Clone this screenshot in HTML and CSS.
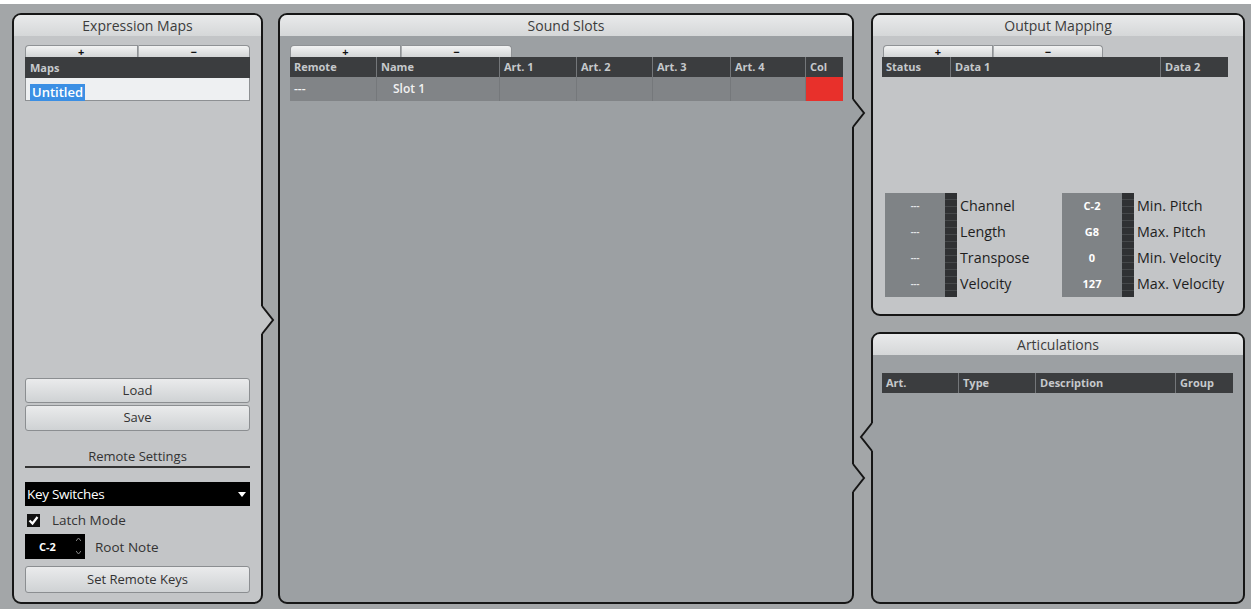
FILE: index.html
```html
<!DOCTYPE html>
<html>
<head>
    <title>Expression Map Setup</title>
    <link rel="stylesheet" href="styles.css">
</head>
<body>

<div class="app">

    <!-- left column: list of maps + remote settings -->
    <section class="panel panel-light maps">
        <div class="panel-title">Expression Maps</div>
        <div class="panel-body">
            <div class="addbar addbar-full"><span>+</span><span>&minus;</span></div>
            <div class="list-head">Maps</div>
            <div class="list-row"><span class="sel">Untitled</span></div>
            <div class="spacer"></div>
            <div class="btn">Load</div>
            <div class="btn btn-save">Save</div>
            <div class="section-label">Remote Settings</div>
            <div class="dropdown">
                <span>Key Switches</span>
                <svg width="8" height="5" viewBox="0 0 8 5"><path d="M0 0h8L4 5z" fill="#fff"/></svg>
            </div>
            <div class="check-row">
                <span class="checkbox">
                    <svg width="13" height="13" viewBox="0 0 13 13"><path d="M2.5 6.5l3 3 5-6.5" fill="none" stroke="#fff" stroke-width="2.2"/></svg>
                </span>
                Latch Mode
            </div>
            <div class="note-row">
                <span class="note-box">
                    C-2
                    <svg class="spin" width="5" height="20" viewBox="0 0 5 20"><path d="M0 5l2.5-3L5 5M0 15l2.5 3L5 15" fill="none" stroke="#8a8a8a" stroke-width="1"/></svg>
                </span>
                Root Note
            </div>
            <div class="btn btn-keys">Set Remote Keys</div>
        </div>
        <svg class="notch notch-right notch-maps" width="14" height="28" viewBox="0 0 14 28">
            <polygon class="notch-fill" points="0,0 2,0 12,14 2,28 0,28"/>
            <polyline points="1,0 12,14 1,28" fill="none" stroke="#161616" stroke-width="2"/>
        </svg>
    </section>

    <!-- middle: sound slot table -->
    <section class="panel panel-dark slots">
        <div class="panel-title">Sound Slots</div>
        <div class="panel-body">
            <div class="addbar addbar-tab"><span>+</span><span>&minus;</span></div>
            <div class="grid slot-grid grid-head">
                <div>Remote</div>
                <div>Name</div>
                <div>Art. 1</div>
                <div>Art. 2</div>
                <div>Art. 3</div>
                <div>Art. 4</div>
                <div>Col</div>
            </div>
            <div class="grid slot-grid grid-row">
                <div>---</div>
                <div class="slot-name">Slot 1</div>
                <div></div>
                <div></div>
                <div></div>
                <div></div>
                <div class="col-red"></div>
            </div>
        </div>
        <svg class="notch notch-right notch-slot-a" width="14" height="28" viewBox="0 0 14 28">
            <polygon class="notch-fill" points="0,0 2,0 12,14 2,28 0,28"/>
            <polyline points="1,0 12,14 1,28" fill="none" stroke="#161616" stroke-width="2"/>
        </svg>
        <svg class="notch notch-right notch-slot-b" width="14" height="28" viewBox="0 0 14 28">
            <polygon class="notch-fill" points="0,0 2,0 12,14 2,28 0,28"/>
            <polyline points="1,0 12,14 1,28" fill="none" stroke="#161616" stroke-width="2"/>
        </svg>
    </section>

    <div class="right-col">
        <!-- output mapping -->
        <section class="panel panel-light output">
            <div class="panel-title">Output Mapping</div>
            <div class="panel-body">
                <div class="addbar addbar-tab addbar-out"><span>+</span><span>&minus;</span></div>
                <div class="grid out-grid grid-head">
                    <div>Status</div>
                    <div>Data 1</div>
                    <div>Data 2</div>
                </div>
                <div class="params">
                    <div class="param-group">
                        <div class="values">
                            <div class="dash">---</div>
                            <div class="dash">---</div>
                            <div class="dash">---</div>
                            <div class="dash">---</div>
                        </div>
                        <div class="strip"></div>
                        <div class="labels">
                            <div>Channel</div>
                            <div>Length</div>
                            <div>Transpose</div>
                            <div>Velocity</div>
                        </div>
                    </div>
                    <div class="param-group">
                        <div class="values">
                            <div>C-2</div>
                            <div>G8</div>
                            <div>0</div>
                            <div>127</div>
                        </div>
                        <div class="strip"></div>
                        <div class="labels">
                            <div>Min. Pitch</div>
                            <div>Max. Pitch</div>
                            <div>Min. Velocity</div>
                            <div>Max. Velocity</div>
                        </div>
                    </div>
                </div>
            </div>
        </section>

        <!-- articulations -->
        <section class="panel panel-dark arts">
            <div class="panel-title">Articulations</div>
            <div class="panel-body">
                <div class="grid art-grid grid-head">
                    <div>Art.</div>
                    <div>Type</div>
                    <div>Description</div>
                    <div>Group</div>
                </div>
            </div>
            <svg class="notch notch-left notch-arts" width="14" height="28" viewBox="0 0 14 28">
                <polygon class="notch-fill" points="14,0 12,0 2,14 12,28 14,28"/>
                <polyline points="13,0 2,14 13,28" fill="none" stroke="#161616" stroke-width="2"/>
            </svg>
        </section>
    </div>

</div>

</body>
</html>
```

FILE: styles.css
```css
* {
    box-sizing: border-box;
}

html, body {
    margin: 0;
}

body {
    width: 1251px;
    height: 609px;
    overflow: hidden;
    background-color: #fff;
    font-family: 'Open Sans', 'Noto Sans', sans-serif;
    color: #222;
}

.app {
    margin-top: 4px;
    height: 605px;
    padding: 9px 0 0 12px;
    background-color: #a3a6a8;
    display: flex;
}

/* panels */
.panel {
    position: relative;
    display: flex;
    flex-direction: column;
    border: 2px solid #161616;
    border-radius: 9px;
    height: 591px;
}

.panel-light {
    background-color: #c3c5c7;
}

.panel-dark {
    background-color: #9ca0a3;
}

.panel-light .notch-fill {
    fill: #c3c5c7;
}

.panel-dark .notch-fill {
    fill: #9ca0a3;
}

.panel-title {
    height: 21px;
    line-height: 21px;
    text-align: center;
    font-size: 14px;
    color: #3c3c3c;
    background: linear-gradient(#e9eaeb, #d5d7d8);
    border-radius: 7px 7px 0 0;
}

.panel-body {
    flex: 1;
    display: flex;
    flex-direction: column;
}

.maps {
    width: 251px;
}

.maps .panel-body {
    padding: 9px 11px 9px 11px;
}

.slots {
    width: 576px;
    margin-left: 15px;
}

.slots .panel-body {
    padding: 9px 9px 0 10px;
}

.right-col {
    width: 374px;
    margin-left: 17px;
    display: flex;
    flex-direction: column;
    gap: 16px;
}

.output {
    height: 303px;
}

.output .panel-body {
    padding: 9px 0 17px 9px;
}

.arts {
    height: 272px;
}

.arts .panel-body {
    padding: 18px 8px 0 9px;
}

/* connector notches on the panel edges */
.notch {
    position: absolute;
    overflow: visible;
}

.notch-right {
    left: 100%;
}

.notch-left {
    right: 100%;
}

.notch-maps {
    top: 291px;
}

.notch-slot-a {
    top: 84px;
}

.notch-slot-b {
    top: 449px;
}

.notch-arts {
    top: 89px;
}

/* + / - bar above the lists */
.addbar {
    display: flex;
    height: 12px;
    font-size: 11px;
    font-weight: 700;
    line-height: 11px;
    color: #111;
}

.addbar span {
    flex: 1;
    text-align: center;
    background: linear-gradient(#f2f3f3, #d3d5d6);
    border: 1px solid #8f9295;
    border-bottom: none;
    border-radius: 4px 4px 0 0;
}

.addbar span + span {
    border-left: 1px solid #a8abad;
}

.addbar-full span:first-child {
    border-radius: 4px 0 0 0;
}

.addbar-full span:last-child {
    border-radius: 0 4px 0 0;
}

.addbar-tab {
    width: 222px;
}

.addbar-tab span:first-child {
    border-radius: 4px 0 0 0;
}

.addbar-tab span:last-child {
    border-radius: 0 4px 0 0;
}

.addbar-out {
    width: 220px;
    margin-left: 1px;
}

/* left list */
.list-head {
    height: 21px;
    line-height: 21px;
    padding-left: 5px;
    background-color: #3b3d3f;
    color: #c8cbce;
    font-size: 11px;
    font-weight: 700;
}

.list-row {
    height: 23px;
    padding: 2px 0 0 4px;
    background-color: #eef0f2;
    border: 1px solid #8d9093;
    border-top: none;
}

.list-row .sel {
    display: inline-block;
    padding: 0 2px;
    line-height: 17px;
    background-color: #3b8fe4;
    color: #fff;
    font-size: 13px;
    font-weight: 600;
}

.spacer {
    flex: 1;
}

.btn {
    height: 25px;
    line-height: 23px;
    text-align: center;
    font-size: 13px;
    color: #333;
    background: linear-gradient(#eaebec, #cfd2d4);
    border: 1px solid #8b8e91;
    border-radius: 3px;
}

.btn-save {
    height: 26px;
    margin-top: 2px;
}

.btn-keys {
    height: 27px;
    line-height: 25px;
    margin-top: 7px;
}

.section-label {
    height: 37px;
    padding-top: 15px;
    line-height: 20px;
    text-align: center;
    font-size: 13px;
    color: #333;
    border-bottom: 2px solid #333;
}

.dropdown {
    margin-top: 14px;
    height: 24px;
    padding: 0 4px 0 2px;
    display: flex;
    align-items: center;
    justify-content: space-between;
    background-color: #000;
    color: #fff;
    font-size: 13.5px;
    letter-spacing: -0.3px;
}

.check-row {
    margin-top: 4px;
    height: 20px;
    display: flex;
    align-items: center;
    gap: 12px;
    padding-left: 2px;
    font-size: 13.5px;
    color: #333;
}

.checkbox {
    width: 13px;
    height: 13px;
    background-color: #111;
    display: flex;
}

.note-row {
    margin-top: 4px;
    height: 25px;
    display: flex;
    align-items: center;
    gap: 10px;
    font-size: 13.5px;
    color: #333;
}

.note-box {
    position: relative;
    width: 60px;
    height: 25px;
    line-height: 25px;
    padding-left: 14px;
    background-color: #000;
    color: #fff;
    font-size: 11px;
    font-weight: 700;
}

.note-box .spin {
    position: absolute;
    right: 4px;
    top: 2px;
}

/* table grids */
.grid {
    display: grid;
}

.grid-head {
    height: 20px;
    background-color: #3b3d3f;
    color: #c6c9cc;
    font-size: 11px;
    font-weight: 700;
    line-height: 20px;
}

.grid-head div {
    padding-left: 4px;
    border-left: 1px solid #74777a;
}

.grid-head div:first-child {
    border-left: none;
}

.slot-grid {
    grid-template-columns: 86px 123px 77px 76px 78px 75px 38px;
    width: 553px;
}

.grid-row {
    height: 24px;
    line-height: 24px;
    background-color: #818487;
    color: #f2f2f2;
    font-size: 12px;
    font-weight: 600;
}

.grid-row div {
    padding-left: 4px;
    border-left: 1px solid #75787b;
}

.grid-row div:first-child {
    border-left: none;
}

.grid-row .slot-name {
    padding-left: 16px;
}

.grid-row .col-red {
    background-color: #e8302b;
}

.out-grid {
    grid-template-columns: 68px 210px 68px;
    width: 346px;
}

.art-grid {
    grid-template-columns: 76px 77px 140px 58px;
    width: 351px;
}

/* output mapping value fields */
.params {
    margin-top: auto;
    display: flex;
    padding-left: 3px;
}

.param-group {
    display: flex;
    flex: none;
    width: 177px;
}

.values {
    width: 60px;
    background-color: #7f8386;
}

.values div,
.labels div {
    height: 26px;
    line-height: 26px;
}

.values div {
    text-align: center;
    color: #fff;
    font-size: 11px;
    font-weight: 700;
}

.values .dash {
    font-size: 9px;
    color: #e4e6e8;
}

.strip {
    width: 12px;
    background-color: #2f3133;
    background-image: repeating-linear-gradient(#2f3133 0 6px, #45484a 6px 7px);
}

.labels {
    padding-left: 3px;
    font-size: 14.3px;
    color: #1e1e1e;
    white-space: nowrap;
}
```
